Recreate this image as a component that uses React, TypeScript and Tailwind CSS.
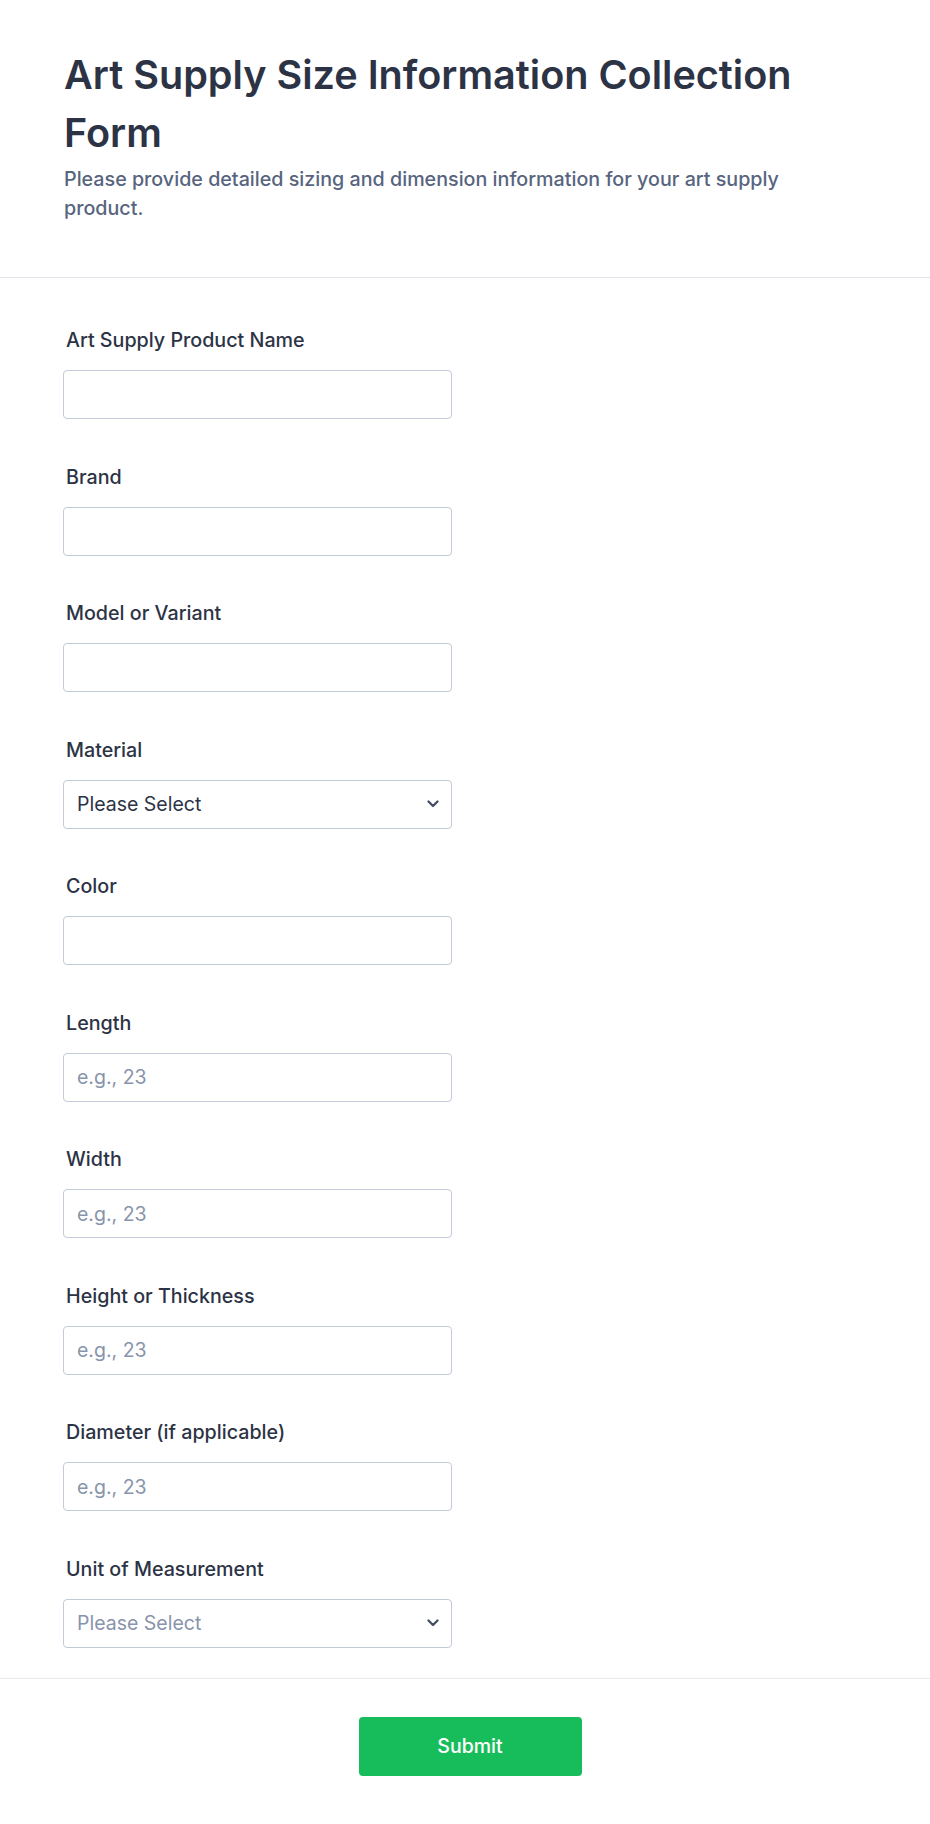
import React from 'react'

type Field = {
  id: string
  label: string
  kind: 'text' | 'number' | 'select'
  muted?: boolean
}

const fields: Field[] = [
  { id: 'product', label: 'Art Supply Product Name', kind: 'text' },
  { id: 'brand', label: 'Brand', kind: 'text' },
  { id: 'model', label: 'Model or Variant', kind: 'text' },
  { id: 'material', label: 'Material', kind: 'select' },
  { id: 'color', label: 'Color', kind: 'text' },
  { id: 'length', label: 'Length', kind: 'number' },
  { id: 'width', label: 'Width', kind: 'number' },
  { id: 'height', label: 'Height or Thickness', kind: 'number' },
  { id: 'diameter', label: 'Diameter (if applicable)', kind: 'number' },
  { id: 'unit', label: 'Unit of Measurement', kind: 'select', muted: true },
]

function Chevron() {
  return (
    <svg
      width="12"
      height="8"
      viewBox="0 0 12 8"
      fill="none"
      className="pointer-events-none absolute right-[13px] top-1/2 -translate-y-1/2"
    >
      <path
        d="M1.5 1.5L6 6L10.5 1.5"
        stroke="#454e62"
        strokeWidth="2.3"
        strokeLinecap="round"
        strokeLinejoin="round"
      />
    </svg>
  )
}

function FieldRow({ field }: { field: Field }) {
  const base =
    'w-full h-[49px] rounded-[4px] border border-[#c3cad8] bg-white px-[13px] text-[19.5px] text-[#2c3345] outline-none'

  return (
    <div className="flex flex-col">
      <label
        htmlFor={field.id}
        className="pl-[3px] mb-[18px] text-[19.7px] leading-[24px] font-medium text-[#2c3345]"
      >
        {field.label}
      </label>
      <div className="relative w-[389px]">
        {field.kind === 'select' ? (
          <>
            <select
              id={field.id}
              defaultValue=""
              className={`${base} appearance-none ${field.muted ? 'text-[#8894ab]' : ''}`}
            >
              <option value="">Please Select</option>
            </select>
            <Chevron />
          </>
        ) : (
          <input
            id={field.id}
            type="text"
            placeholder={field.kind === 'number' ? 'e.g., 23' : undefined}
            className={`${base} placeholder:text-[#8894ab]`}
          />
        )}
      </div>
    </div>
  )
}

export default function App() {
  return (
    <div className="min-h-screen bg-white font-['Inter',sans-serif]">
      {/* Header */}
      <header className="px-[64px] pt-[47px] pb-[54px] border-b border-[#e3e5ec]">
        <div className="max-w-[770px]">
          <h1 className="text-[39.6px] leading-[57.6px] font-semibold text-[#2c3345]">
            Art Supply Size Information Collection Form
          </h1>
          <p className="mt-[3px] text-[19.7px] leading-[29px] font-medium text-[#57647e]">
            Please provide detailed sizing and dimension information for your
            art supply product.
          </p>
        </div>
      </header>

      {/* Fields */}
      <form className="flex flex-col gap-[45.5px] px-[63px] pt-[50px] pb-[30px] border-b border-[#e8ebf0]">
        {fields.map((f) => (
          <FieldRow key={f.id} field={f} />
        ))}
      </form>

      {/* Submit */}
      <div className="flex justify-center pl-[10px] pt-[38px] pb-[49px]">
        <button
          type="button"
          className="w-[223px] h-[59px] rounded-[4px] bg-[#18bd5b] text-[19.5px] font-medium text-white"
        >
          Submit
        </button>
      </div>
    </div>
  )
}
